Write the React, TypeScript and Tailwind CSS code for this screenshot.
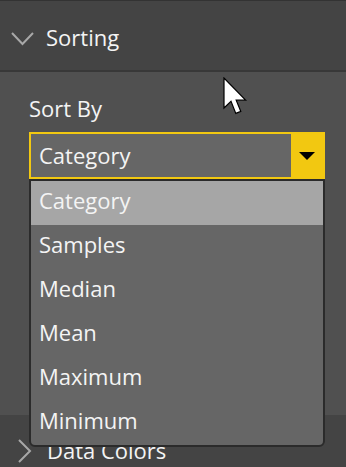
const items = ["Category", "Samples", "Median", "Mean", "Maximum", "Minimum"];

function Cursor() {
  return (
    <svg
      className="absolute left-[223px] top-[77px]"
      width="26"
      height="40"
      viewBox="0 0 13 20"
    >
      <path
        d="M0.5 0.5 L0.5 15.5 L4 12.2 L6.4 18.2 L8.9 17.2 L6.6 11.6 L11.3 11.6 Z"
        fill="#ffffff"
        stroke="#000000"
        strokeWidth="0.6"
        strokeLinejoin="miter"
      />
    </svg>
  );
}

export default function App() {
  return (
    <div className="relative w-[346px] h-[467px] overflow-hidden bg-[#444444] font-['Open_Sans',sans-serif] text-[#f4f4f4]">
      {/* Sorting header */}
      <div className="h-[72px] border-t border-[#333333] border-b-2 border-b-[#383838] flex items-start pt-[21px]">
        <svg className="ml-[11px] mt-[10px]" width="23" height="14" viewBox="0 0 23 14">
          <polyline points="1,1 11.5,12 22,1" fill="none" stroke="#a8a8a8" strokeWidth="2" />
        </svg>
        <span className="ml-[12px] text-[22px] leading-[30px]">Sorting</span>
      </div>

      {/* panel */}
      <div className="h-[343px] bg-[#505050] pl-[29px] pr-[21px] pt-[21px]">
        <div className="text-[22px] leading-[30px]">Sort By</div>
        <div className="relative mt-[9px]">
          <div className="flex h-[47px] border-2 border-[#f2c811]">
            <div className="flex-1 bg-[#666666] pl-[8px] pt-[6px] text-[22px] leading-[30px]">Category</div>
            <div className="w-[32px] bg-[#f2c811] flex items-center justify-center">
              <svg width="16" height="8" viewBox="0 0 16 8">
                <polygon points="0,0 16,0 8,8" fill="#000000" />
              </svg>
            </div>
          </div>

          <div className="absolute left-0 right-0 top-full z-10 bg-[#666666] border-2 border-[#2b2b2b] rounded-b-[6px] overflow-hidden">
            {items.map((item, i) => (
              <div
                key={item}
                className={
                  "h-[44px] pl-[8px] pt-[4px] text-[22px] leading-[30px] " +
                  (i === 0 ? "bg-[#a6a6a6]" : "")
                }
              >
                {item}
              </div>
            ))}
          </div>
        </div>
      </div>

      {/* Data Colors header */}
      <div className="h-[70px] flex items-start pt-[20px]">
        <svg className="ml-[18px] mt-[4px]" width="14" height="24" viewBox="0 0 14 24">
          <polyline points="1,1 12,12 1,23" fill="none" stroke="#a8a8a8" strokeWidth="2" />
        </svg>
        <span className="ml-[15px] text-[22px] leading-[30px]">Data Colors</span>
      </div>

      <Cursor />
    </div>
  );
}
